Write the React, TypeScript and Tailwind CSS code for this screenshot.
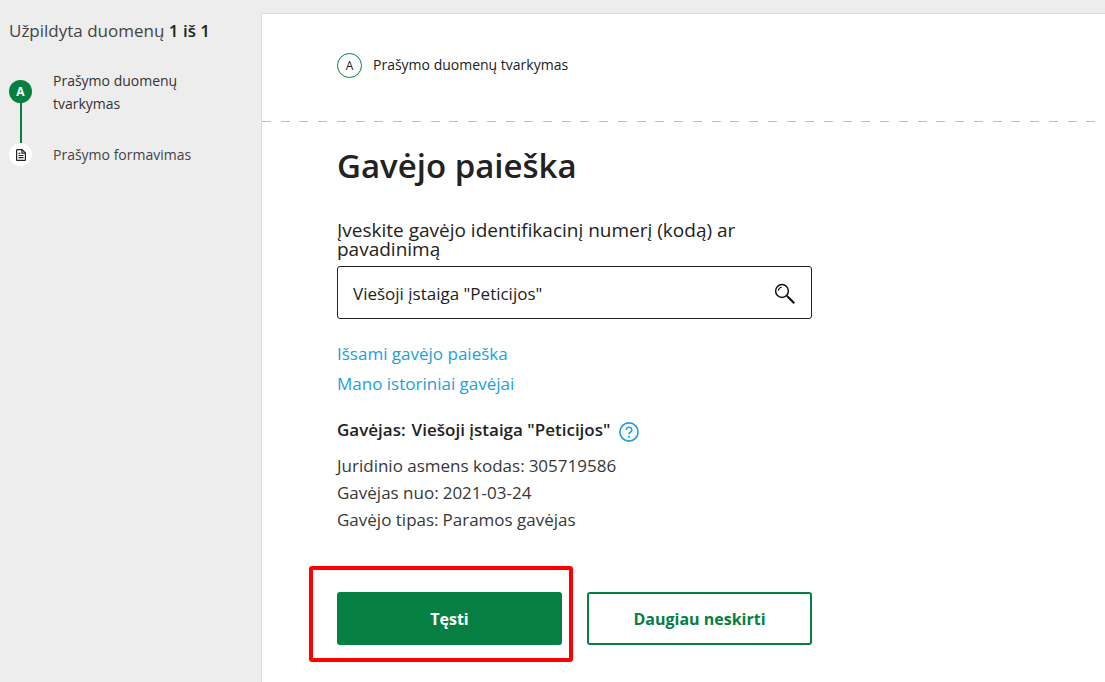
import React, { useState } from "react";

interface Step {
  label: string;
  done: boolean;
}

const steps: Step[] = [
  { label: "Prašymo duomenų tvarkymas", done: true },
  { label: "Prašymo formavimas", done: false },
];

const details = [
  { name: "Juridinio asmens kodas", value: "305719586" },
  { name: "Gavėjas nuo", value: "2021-03-24" },
  { name: "Gavėjo tipas", value: "Paramos gavėjas" },
];

const DocumentIcon = () => (
  <svg viewBox="0 0 12 12" className="size-3" fill="none" stroke="#222" strokeWidth="1.2">
    <path d="M1.6 11.3V1.2a.5.5 0 0 1 .5-.5h5l3.3 3.2v7a.5.5 0 0 1-.5.5H2.1a.5.5 0 0 1-.5-.5z" />
    <path d="M6.9.8v3.3h3.4M3.5 4.3h1.8M3.5 6.5h5M3.5 8.7h5" />
  </svg>
);

const SearchIcon = () => (
  <svg viewBox="0 0 22 22" className="size-[22px]" fill="none" stroke="#111">
    <circle cx="8" cy="8" r="6.4" strokeWidth="1.5" />
    <path d="M4.4 7.6A3.7 3.7 0 0 1 7.7 4.3" strokeWidth="1.1" />
    <path d="m12.6 12.6 2 2" strokeWidth="1.5" />
    <path d="m14 14 6.3 6.3" strokeWidth="2.2" />
  </svg>
);

const HelpIcon = () => (
  <svg viewBox="0 0 20 20" className="size-5" fill="none" stroke="#1c9fda">
    <circle cx="10" cy="10" r="9.1" strokeWidth="1.6" />
    <path d="M7.2 7.9a2.8 2.6 0 1 1 4.4 2.1c-1 .6-1.6 1-1.6 2.2" strokeWidth="1.6" />
    <path d="M10 13.7v1.8" strokeWidth="1.8" />
  </svg>
);

const Sidebar: React.FC = () => (
  <aside className="w-[261px] shrink-0 pl-[9px] pt-[18px]">
    <p className="text-[17px] leading-[26px] text-[#444]">
      Užpildyta duomenų <b className="font-semibold text-[#222]">1 iš 1</b>
    </p>
    <ol className="mt-[25px]">
      {steps.map((step) => (
        <li key={step.label} className="flex gap-[21px]">
          <div className="flex w-[23px] flex-col items-center">
            {step.done ? (
              <>
                <span className="mt-[11px] flex size-[23px] shrink-0 items-center justify-center rounded-full bg-[#057f42] text-xs font-bold text-white">
                  A
                </span>
                <span className="w-[2px] grow bg-[#057f42]" />
              </>
            ) : (
              <span className="flex size-[23px] items-center justify-center rounded-full bg-white">
                <DocumentIcon />
              </span>
            )}
          </div>
          <span
            className={`w-[150px] text-sm leading-[23px] ${step.done ? "pb-[28px] text-[#333]" : "text-[#444]"}`}
          >
            {step.label}
          </span>
        </li>
      ))}
    </ol>
  </aside>
);

export default function App() {
  const [query, setQuery] = useState('Viešoji įstaiga "Peticijos"');

  return (
    <div className="flex min-h-screen bg-[#ededed] font-['Open_Sans',sans-serif] text-[#222]">
      <Sidebar />

      <main className="mt-[13px] grow border-t border-l border-[#dcdcdc] bg-white">
        <header className="flex items-center gap-[11px] px-[75px] pt-[39px] pb-[43px]">
          <span className="flex size-[25px] items-center justify-center rounded-full border border-[#057f42] text-xs">
            A
          </span>
          <span className="pb-[2px] text-sm">Prašymo duomenų tvarkymas</span>
        </header>
        <div className="h-px bg-[repeating-linear-gradient(to_right,#bdbdbd_0,#bdbdbd_9px,transparent_9px,transparent_calc(100%/45))]" />

        <section className="max-w-[550px] pt-[24px] pb-[37px] pl-[75px]">
          <h1 className="text-[33px] leading-[40px] font-semibold">Gavėjo paieška</h1>

          <label htmlFor="recipient" className="mt-[35px] block text-[19px] leading-[19px]">
            Įveskite gavėjo identifikacinį numerį (kodą) ar pavadinimą
          </label>
          <div className="mt-[7px] flex h-[53px] items-center rounded-[3px] border border-[#222] px-[15px] pt-[3px]">
            <input
              id="recipient"
              type="text"
              value={query}
              onChange={(e) => setQuery(e.target.value)}
              className="min-w-0 grow text-[17px] outline-none"
            />
            <button type="button" aria-label="Ieškoti">
              <SearchIcon />
            </button>
          </div>

          <nav className="mt-[20px] flex flex-col items-start text-[17px] leading-[30px] text-[#1c9fda]">
            <a href="#paieska">Išsami gavėjo paieška</a>
            <a href="#istorija">Mano istoriniai gavėjai</a>
          </nav>

          <div className="mt-[18px] flex items-center text-[17px] leading-[26px] font-semibold">
            <span className="mr-[6px]">Gavėjas:</span>
            <span className="mr-[9px]">Viešoji įstaiga "Peticijos"</span>
            <button type="button" aria-label="Pagalba" className="pt-[3px]">
              <HelpIcon />
            </button>
          </div>
          <dl className="mt-[9px] text-[17px] leading-[27px] text-[#383838]">
            {details.map(({ name, value }) => (
              <div key={name} className="flex gap-1">
                <dt>{name}:</dt>
                <dd>{value}</dd>
              </div>
            ))}
          </dl>

          <div className="mt-[59px] grid grid-cols-2 gap-[25px]">
            <div className="relative">
              <button type="button" className="h-[53px] w-full rounded-[3px] bg-[#057f42] text-base font-bold text-white">
                Tęsti
              </button>
              <div className="pointer-events-none absolute -top-[26px] -right-[11px] -bottom-[17px] -left-[28px] rounded-[3px] border-4 border-[#fe0000]" />
            </div>
            <button
              type="button"
              className="h-[53px] rounded-[3px] border-2 border-[#057f42] bg-white text-base font-bold text-[#057f42]"
            >
              Daugiau neskirti
            </button>
          </div>
        </section>
      </main>
    </div>
  );
}
